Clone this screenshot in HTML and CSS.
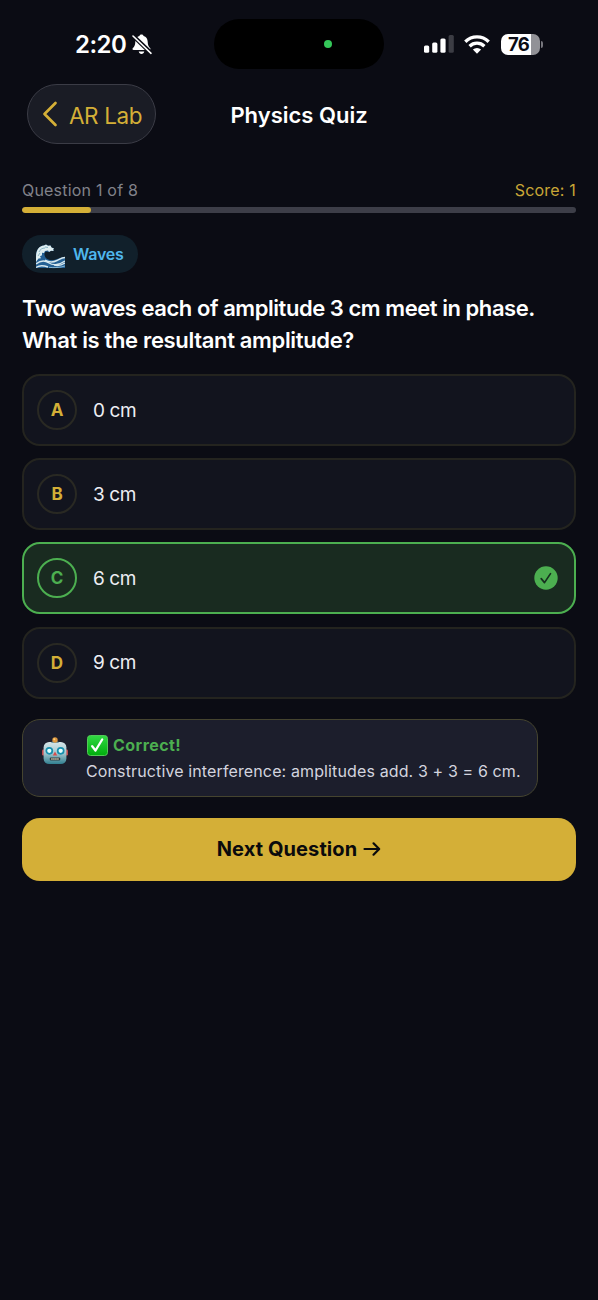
FILE: index.html
```html
<!DOCTYPE html>
<html lang="en">
<head>
<meta charset="utf-8">
<title>Physics Quiz</title>
<link rel="stylesheet" href="styles.css">
</head>
<body>
<div class="status">
  <div class="clock"><span class="time">2:20</span>
    <svg class="bell" width="20" height="21" viewBox="0 0 20 21"><path d="M9.500.5c1.200 0 2 .7 2.100 1.600 2.600.8 4 2.900 4.100 5.700.1 3.500.8 4.700 2.400 6.300.8.800.5 1.900-.7 1.900H1.600c-1.200 0-1.500-1.100-.7-1.900 1.600-1.600 2.300-2.800 2.400-6.300.1-2.800 1.500-4.900 4.100-5.700C7.500 1.200 8.300.5 9.500.5zM6.700 17.500h5.600c-.3 1.500-1.400 2.400-2.800 2.400s-2.500-.9-2.800-2.400z" fill="#fff"/><path d="M0 .8 19.500 19.500" stroke="#0b0c14" stroke-width="4.200"/><path d="M1 2 19 19.300" stroke="#fff" stroke-width="1.600" stroke-linecap="round"/></svg>
  </div>
  <div class="island"><span class="camera-dot"></span></div>
  <div class="indicators">
    <svg class="signal" width="30" height="18" viewBox="0 0 30 18"><g fill="#fff"><rect x="0" y="10.500" width="5.200" height="7.300" rx="1.500"/><rect x="8.200" y="7.500" width="5.200" height="10.300" rx="1.500"/><rect x="16.400" y="3.500" width="5.200" height="14.300" rx="1.500"/></g><rect x="24.600" y="0" width="5.200" height="17.800" rx="1.500" fill="#3c3d44"/></svg>
    <svg class="wifi" width="26" height="19" viewBox="0 0 26 19"><g fill="none" stroke="#fff" stroke-width="3.300"><path d="M1.300 6.700a16.800 16.800 0 0 1 23.400 0"/><path d="M5.600 11.200a10.600 10.600 0 0 1 14.800 0"/></g><path d="M13 18.700 8.900 14.600a5.900 5.900 0 0 1 8.200 0z" fill="#fff"/></svg>
    <div class="battery"><span>76</span></div><i class="battery-cap"></i>
  </div>
</div>
<header class="nav">
  <a class="back"><svg width="16" height="26" viewBox="0 0 16 26"><path d="M13.500 2 2.500 13l11 11" fill="none" stroke="#d4af37" stroke-width="2.700" stroke-linecap="round" stroke-linejoin="round"/></svg><span>AR Lab</span></a>
  <h1 class="title"><span>Physics Quiz</span></h1>
</header>
<main class="quiz">
  <div class="meta"><span class="count">Question 1 of 8</span><span class="score">Score: 1</span></div>
  <div class="track"><div class="fill" style="width:12.500%"></div></div>
  <div class="tag">
    <svg width="29" height="25" viewBox="0 0 29 25"><path d="M0 24V12C0 6 3 2 8 1.500l2-1 2 1.300 2.500-.3 1 2 2.500 1-1 1.500 1 1-3-.3-2 1.300-3-.5c-2 1-2 4-.5 6 2.500 3 7 3.200 11 1.700 3-1 5-2.200 8.500-2.200v11z" fill="#246094"/><path d="M0 13C0 6 3 2 8 1.500l2-1 2 1.300 2.500-.3 1 2 2.500 1-1 1.500 1 1-3-.3-2 1.300-1-1.500-3 .5-1 2-2-.2v2.500l-2 1 1 2-2.500.2L0 18z" fill="#dfeef0"/><path d="M3 8c1-2.500 3-4 6-4M2 12l2-3M9 3l3 .5" stroke="#88b5c5" stroke-width="1" fill="none"/><path d="M0 20c5-4 10-3 13-1s9 3 16-2M0 23.500c4-3 8-2 12-.5M9 16c4 2.500 9 2 12 .5s5-3 8-3M18 21c4 1 8 0 11-2" stroke="#d7e8ee" stroke-width="1.400" fill="none"/><path d="M13 23.300c5 .7 11 .3 16-1.300" stroke="#86b6d4" stroke-width="1" fill="none"/></svg>
    <span>Waves</span>
  </div>
  <h2 class="question"><span class="q1">Two waves each of amplitude 3 cm meet in phase.</span><br><span class="q2">What is the resultant amplitude?</span></h2>
  <div class="options">
    <div class="option"><b class="letter">A</b><span>0 cm</span></div>
    <div class="option"><b class="letter">B</b><span>3 cm</span></div>
    <div class="option correct"><b class="letter">C</b><span>6 cm</span><svg class="check" width="24" height="24" viewBox="0 0 24 24"><circle cx="12" cy="12" r="11.700" fill="#4caf50"/><path d="m7.200 12.600 3.300 4 6-9" fill="none" stroke="#17301f" stroke-width="1.700" stroke-linecap="round" stroke-linejoin="round"/></svg></div>
    <div class="option"><b class="letter">D</b><span>9 cm</span></div>
  </div>
  <section class="feedback">
    <svg class="robot" width="26" height="28" viewBox="0 0 26 28"><defs><linearGradient id="face" x1="0" y1="0" x2="0" y2="1"><stop offset="0" stop-color="#d6e5e8"/><stop offset=".5" stop-color="#a4c8cf"/><stop offset="1" stop-color="#317f90"/></linearGradient></defs><rect x="0" y="12.500" width="3" height="6" rx="1.200" fill="#c34c4e"/><rect x="23" y="12.500" width="3" height="6" rx="1.200" fill="#c34c4e"/><rect x="1.600" y="5" width="22.800" height="22" rx="5.500" fill="url(#face)"/><path d="M9 6h8l-1-1.500h-6z" fill="#7097a3"/><circle cx="13" cy="3" r="2.700" fill="#dd963f"/><circle cx="12.300" cy="2.300" r="1" fill="#ffd27b"/><g fill="#e4ffff" stroke="#168fae" stroke-width="1.700"><circle cx="7.300" cy="13.800" r="3"/><circle cx="18.700" cy="13.800" r="3"/></g><path d="m13 14.500-2.200 4h4.400z" fill="#d94c4a"/><rect x="7.800" y="20.500" width="10.400" height="3" rx="1" fill="#303c41"/><path d="M9.300 22h7.500" stroke="#e5d7bb" stroke-width="1.500" stroke-dasharray="1.300 .7"/></svg>
    <div class="message">
      <div class="verdict"><svg width="21" height="21" viewBox="0 0 21 21"><defs><linearGradient id="tick" x1="0" y1="0" x2="0" y2="1"><stop offset="0" stop-color="#32d944"/><stop offset="1" stop-color="#00ad0d"/></linearGradient></defs><rect x=".5" y=".5" width="20" height="20" rx="3" fill="url(#tick)" stroke="#52c957"/><path d="m5.200 11.200 3.300 4.300 6.700-11" fill="none" stroke="#fff" stroke-width="2.300" stroke-linecap="round" stroke-linejoin="round"/></svg><span>Correct!</span></div>
      <p class="explain"><span>Constructive interference: amplitudes add. 3 + 3 = 6 cm.</span></p>
    </div>
  </section>
  <button class="next"><span>Next Question</span><svg width="18" height="16" viewBox="0 0 18 16"><path d="M1.500 8h14.500M10.500 2.300 16.200 8l-5.700 5.700" fill="none" stroke="#0a0a0c" stroke-width="2.200" stroke-linecap="round" stroke-linejoin="round"/></svg></button>
</main>
</body>
</html>
```
FILE: styles.css
```css
* { box-sizing: border-box; }
body { margin: 0; width: 598px; height: 1300px; overflow: hidden; background: #0b0c14; color: #fff; font-family: Inter, "Liberation Sans", sans-serif; }
svg { display: block; flex: none; }
.status { height: 84px; display: grid; grid-template-columns: 214px 170px 1fr; padding-top: 19px; }
.clock { height: 50px; display: flex; align-items: center; padding-left: 75px; gap: 5px; }
.time { width: 52px; padding-top: 2px; font-size: 24px; font-weight: 600; line-height: 30px; letter-spacing: -.5px; white-space: nowrap; }
.island { height: 50px; border-radius: 25px; background: #000; display: flex; align-items: center; padding-left: 110px; }
.camera-dot { width: 8px; height: 8px; border-radius: 50%; background: #34c759; }
.indicators { height: 50px; display: flex; align-items: center; padding-left: 40px; }
.wifi { margin-left: 10px; }
.battery { margin-left: 11px; width: 39px; height: 21px; border-radius: 7px; background: linear-gradient(90deg, #fff 30px, #929297 30px); color: #0b0c14; font-size: 18.500px; font-weight: 700; line-height: 21px; padding-left: 7px; letter-spacing: -.8px; }
.battery-cap { width: 2px; height: 7px; margin-left: 1px; border-radius: 0 3px 3px 0; background: #77777d; }
.nav { height: 61px; display: grid; grid-template-columns: 129px 1fr 129px; padding: 0 27px; }
.back { height: 60px; border: 1px solid #3b3c46; border-radius: 30px; background: #1a1c25; color: #d4af37; display: flex; align-items: center; padding-left: 14px; gap: 11px; font-size: 22.500px; letter-spacing: -.4px; white-space: nowrap; }
.back span { padding-top: 2px; }
.title { margin: 0; text-align: center; font-size: 22px; font-weight: 600; line-height: 62px; }
.quiz { padding: 33px 22px 0; }
.meta { display: flex; justify-content: space-between; height: 29px; line-height: 24px; font-size: 16px; letter-spacing: .2px; }
.count { color: #81828a; }
.score { color: #c9a636; }
.track { height: 6px; border-radius: 3px; background: #3d3e48; overflow: hidden; }
.fill { height: 6px; border-radius: 3px; background: #d4af37; }
.tag { margin-top: 22px; width: 116px; height: 38px; border-radius: 19px; background: #11202b; display: flex; align-items: center; padding: 2px 0 0 14px; gap: 8px; color: #4fb7ed; font-size: 16px; font-weight: 600; line-height: 20px; letter-spacing: -.2px; }
.tag svg { margin-top: 3px; }
.tag span { margin-top: -2px; }
.question { margin: 20px 0 0; font-size: 22px; font-weight: 600; line-height: 31.500px; white-space: nowrap; }
.q1 { letter-spacing: -.45px; }
.q2 { letter-spacing: -.34px; }
.options { margin-top: 18px; display: grid; gap: 12.200px; }
.option { height: 72px; border: 2px solid #24241f; border-radius: 18px; background: #12141e; display: flex; align-items: center; padding: 0 16px 0 13px; font-size: 19px; letter-spacing: -.4px; color: #edeef3; }
.letter { width: 40px; height: 40px; border: 2px solid #292923; border-radius: 50%; display: flex; align-items: center; justify-content: center; margin-right: 16px; color: #d4af37; font-size: 17px; font-weight: 700; letter-spacing: 0; }
.correct { border-color: #4caf50; background: #192b20; }
.correct .letter { border-color: #4caf50; color: #4caf50; }
.check { margin-left: auto; }
.feedback { margin-top: 20.400px; width: 516px; height: 78px; border: 1px solid #45442f; border-radius: 18px; background: #1c1e2c; display: flex; padding: 15px 0 0 19px; gap: 18px; }
.robot { margin-top: 2px; }
.verdict { display: flex; align-items: center; height: 21px; gap: 5px; padding-left: 1px; color: #4caf50; font-size: 16px; font-weight: 700; letter-spacing: .45px; }
.explain { margin: 2px 0 0; font-size: 16px; line-height: 26px; letter-spacing: .125px; color: #d3d4df; white-space: nowrap; }
.next { margin: 21px 0 0; width: 554px; height: 63px; border: 0; border-radius: 18px; background: #d4af37; display: flex; align-items: center; justify-content: center; gap: 6px; color: #0a0a0c; font: 700 20px Inter, sans-serif; letter-spacing: .1px; }
```
